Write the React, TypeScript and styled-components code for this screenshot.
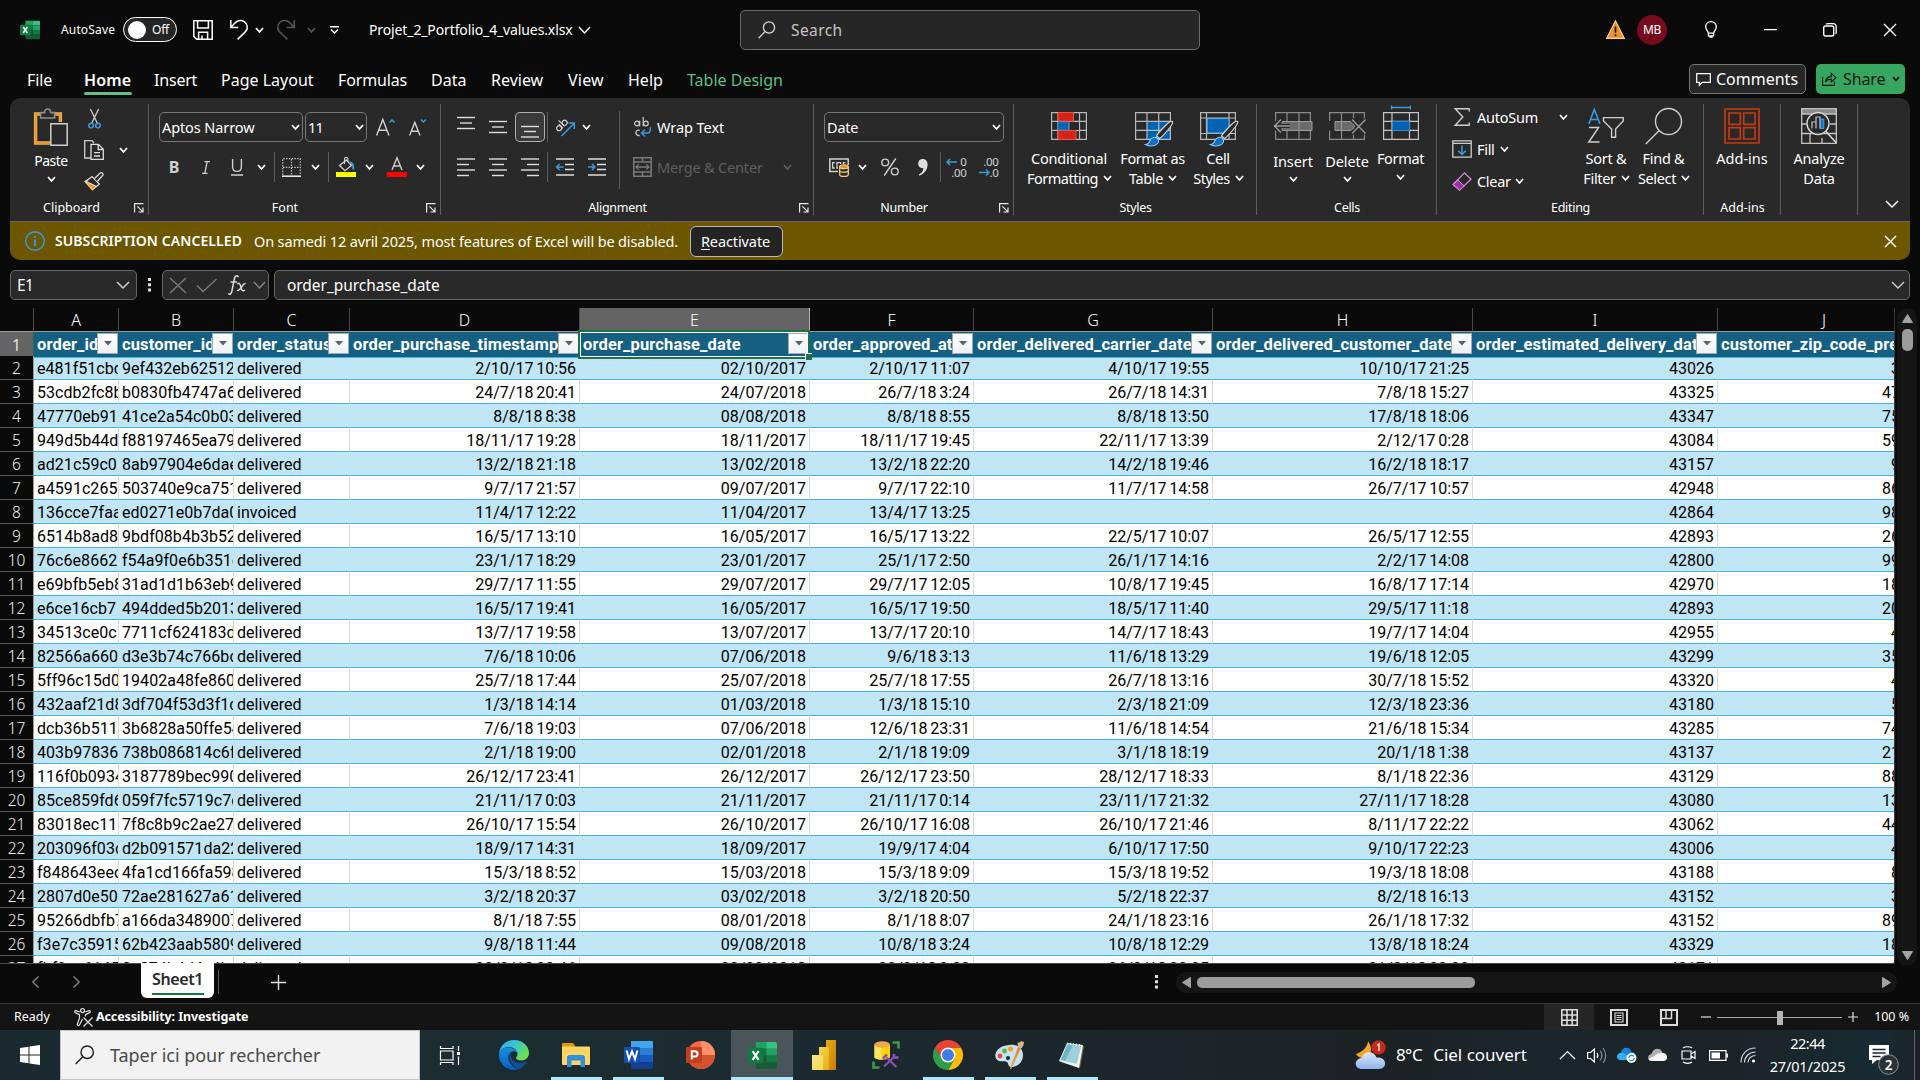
import React from 'react';
import styled, { createGlobalStyle, css } from 'styled-components';

const GlobalStyle = createGlobalStyle`
  * { box-sizing: border-box; }
  body { margin: 0; background: #0a0a0a; overflow: hidden; }
`;

/* ---------- shared primitives ---------- */

const Screen = styled.div`
  width: 1920px;
  height: 1080px;
  display: flex;
  flex-direction: column;
  background: #0a0a0a;
  color: #fff;
  font-family: 'Noto Sans', 'Open Sans', sans-serif;
  overflow: hidden;
`;

const T = styled.span<{ $s?: number; $ls?: number; $w?: number; $c?: string }>`
  font-size: ${(p) => p.$s ?? 14.5}px;
  letter-spacing: ${(p) => p.$ls ?? 0}px;
  font-weight: ${(p) => p.$w ?? 400};
  color: ${(p) => p.$c ?? '#fff'};
  line-height: 20px;
  white-space: pre;
`;

const Svg = styled.svg`
  display: block;
  flex: none;
  overflow: visible;
  fill: none;
`;

const Row = styled.div<{ $h?: number; $gap?: number }>`
  display: flex;
  align-items: center;
  height: ${(p) => (p.$h ? `${p.$h}px` : 'auto')};
  gap: ${(p) => p.$gap ?? 0}px;
`;

const Tool = styled.div<{ $w: number; $active?: boolean }>`
  width: ${(p) => p.$w}px;
  height: 30px;
  flex: none;
  display: flex;
  align-items: center;
  justify-content: center;
  ${(p) =>
    p.$active &&
    css`
      width: 30px;
      margin: 0 1px;
      background: #3a3a3a;
      box-shadow: inset 0 0 0 1px #b0b0b0;
      border-radius: 5px;
    `}
`;

const Rule = styled.div<{ $w?: number; $h?: number }>`
  width: ${(p) => p.$w ?? 7}px;
  height: ${(p) => p.$h ?? 30}px;
  flex: none;
  display: flex;
  justify-content: center;
  &::after {
    content: '';
    width: 1px;
    height: 100%;
    background: #5c5c5c;
  }
`;

const Chevron = ({ w = 7, h = 4, c = '#fff', sw = 1.7 }: { w?: number; h?: number; c?: string; sw?: number }) => (
  <Svg width={w} height={h} viewBox={`0 0 ${w} ${h}`}>
    <path d={`M0 0 L${w / 2} ${h} L${w} 0`} stroke={c} strokeWidth={sw} />
  </Svg>
);

/* ---------- title bar ---------- */

const TitleBar = styled.header`
  height: 59px;
  flex: none;
  display: flex;
  align-items: center;
  justify-content: space-between;
`;

const TitleLeft = styled.div`
  width: 740px;
  display: flex;
  align-items: center;
  padding-left: 20px;
`;

const Toggle = styled.div`
  width: 54px;
  height: 25px;
  margin: 0 6px 0 8px;
  border: 1px solid #fff;
  border-radius: 13px;
  background: #252525;
  display: flex;
  align-items: center;
  gap: 6px;
  padding-left: 4px;
  &::before {
    content: '';
    width: 18px;
    height: 18px;
    border-radius: 50%;
    background: #fff;
  }
`;

const AutoSaveLabel = styled.div`
  width: 75px;
  padding-left: 21px;
  display: flex;
`;

const FileName = styled.div`
  display: flex;
  align-items: center;
  gap: 6px;
  margin-left: 16px;
`;

const SearchBox = styled.div`
  width: 460px;
  height: 40px;
  margin-top: 1px;
  background: #262626;
  border: 1px solid #6a6a6a;
  border-radius: 5px;
  display: flex;
  align-items: center;
  padding-left: 17px;
  gap: 15px;
`;

const TitleRight = styled.div`
  width: 720px;
  display: flex;
  align-items: center;
  justify-content: flex-end;
`;

const Avatar = styled.div`
  width: 30px;
  height: 30px;
  border-radius: 50%;
  background: #750b1c;
  display: flex;
  align-items: center;
  justify-content: center;
  margin: 0 15px 0 12px;
`;

const ExcelLogo = ({ s = 20 }: { s?: number }) => (
  <Svg width={s} height={s} viewBox="0 0 30 28">
    <path d="M8 0h11v7H8z" fill="#21a366" />
    <path d="M19 0h9a2 2 0 0 1 2 2v5H19z" fill="#33c481" />
    <path d="M8 7h11v7H8z" fill="#107c41" />
    <path d="M19 7h11v7H19z" fill="#21a366" />
    <path d="M8 14h11v7H8z" fill="#185c37" />
    <path d="M19 14h11v7H19z" fill="#107c41" />
    <path d="M8 21h22v5a2 2 0 0 1-2 2H10a2 2 0 0 1-2-2z" fill="#185c37" />
    <rect x="0" y="6" width="16" height="16" rx="1.4" fill="#107c41" />
    <path d="M4.8 9.5 11 18.5M11 9.5 4.8 18.5" stroke="#fff" strokeWidth="2.3" />
  </Svg>
);

const SearchGlyph = ({ s = 18, c = '#d8d8d8' }: { s?: number; c?: string }) => (
  <Svg width={s} height={s} viewBox="0 0 18 18">
    <circle cx="11" cy="6.5" r="5.6" stroke={c} strokeWidth="1.3" />
    <path d="M7 10.6 0.6 17.2" stroke={c} strokeWidth="1.3" />
  </Svg>
);

const TitleArea = () => (
  <TitleBar>
    <TitleLeft>
      <ExcelLogo />
      <AutoSaveLabel>
        <T $s={12} $ls={0.15}>AutoSave</T>
      </AutoSaveLabel>
      <Toggle>
        <T $s={12} $ls={-0.2}>Off</T>
      </Toggle>
      <Tool $w={40}>
        <Svg width="20" height="20" viewBox="0 0 20 20">
          <path d="M0.8 0.8H19.2V19.2H3.6L0.8 16.4zM4.6 0.8V8H15.4V0.8M5.6 19V12.2H14.6V19M9 19v-3.4" stroke="#fff" strokeWidth="1.5" />
        </Svg>
      </Tool>
      <Tool $w={31}>
        <Svg width="18" height="20" viewBox="0 0 18 20">
          <path d="M0.8 0v7.4H8.2M1 7.2 5.4 2.6C9-1 14.4 0.4 16.4 4c1.5 3 .8 6-1.6 8.4L7.6 19.4" stroke="#fff" strokeWidth="1.5" />
        </Svg>
      </Tool>
      <Tool $w={11}><Chevron w={7} /></Tool>
      <Tool $w={42}>
        <Svg width="18" height="20" viewBox="0 0 18 20">
          <path d="M17.2 0v7.4H9.8M17 7.2 12.6 2.6C9-1 3.6 0.4 1.6 4 .1 7 .8 10 3.2 12.4L10.4 19.4" stroke="#555" strokeWidth="1.5" />
        </Svg>
      </Tool>
      <Tool $w={8}><Chevron w={7} c="#555" /></Tool>
      <Tool $w={38}>
        <Svg width="9" height="8" viewBox="0 0 9 8">
          <path d="M0 .7H9M1 3.6 4.5 7 8 3.6" stroke="#fff" strokeWidth="1.4" />
        </Svg>
      </Tool>
      <FileName>
        <T $s={14} $ls={-0.12}>Projet_2_Portfolio_4_values.xlsx</T>
        <Chevron w={11} h={6} sw={1.4} />
      </FileName>
    </TitleLeft>
    <SearchBox>
      <SearchGlyph />
      <T $s={15.5} $ls={0.4} $c="#c4c4c4">Search</T>
    </SearchBox>
    <TitleRight>
      <Svg width="19" height="19" viewBox="0 0 19 19">
        <path d="M9.5.8 18.4 18.4H.6z" fill="#e8912d" stroke="#f6d58a" strokeWidth="1.1" />
        <path d="M9.5 6.4v6.4M9.5 14.2v2" stroke="#2b1b05" strokeWidth="1.7" />
      </Svg>
      <Avatar>
        <T $s={12} $ls={-0.4}>MB</T>
      </Avatar>
      <Tool $w={58}>
        <Svg width="12" height="17" viewBox="0 0 12 17">
          <path d="M3.3 12.2C3.3 10 .7 9 .7 5.8.7 2.8 3 .7 6 .7s5.3 2.1 5.3 5.1c0 3.2-2.6 4.2-2.6 6.4zM3.4 12.4v2.4h5.2v-2.4M4.4 16.2h3.2" stroke="#fff" strokeWidth="1.3" />
        </Svg>
      </Tool>
      <Tool $w={60}>
        <Svg width="13" height="2" viewBox="0 0 13 2"><path d="M0 .6H13" stroke="#fff" strokeWidth="1.3" /></Svg>
      </Tool>
      <Tool $w={60}>
        <Svg width="14" height="14" viewBox="0 0 14 14">
          <rect x=".7" y="3" width="10" height="10" rx="1.8" stroke="#fff" strokeWidth="1.4" />
          <path d="M3 1.2C3.6.8 4 .7 5 .7h5.2a3 3 0 0 1 3 3V9c0 1-.1 1.4-.6 2" stroke="#fff" strokeWidth="1.3" />
        </Svg>
      </Tool>
      <Tool $w={60}>
        <Svg width="12" height="12" viewBox="0 0 12 12"><path d="M0 0 12 12M12 0 0 12" stroke="#fff" strokeWidth="1.4" /></Svg>
      </Tool>
    </TitleRight>
  </TitleBar>
);

/* ---------- tabs ---------- */

const TabBar = styled.nav`
  height: 39px;
  flex: none;
  display: flex;
  align-items: flex-start;
  justify-content: space-between;
  padding: 5px 15px 0 27px;
`;

const Tab = styled.div<{ $w: number; $on?: boolean }>`
  width: ${(p) => p.$w}px;
  height: 32px;
  padding-top: 6px;
  display: flex;
  flex-direction: column;
  ${(p) =>
    p.$on &&
    css`
      &::after {
        content: '';
        width: 48px;
        height: 3px;
        margin-top: 2px;
        border-radius: 2px;
        background: #5fbf84;
      }
    `}
`;

const CommentsButton = styled.div`
  width: 117px;
  height: 30px;
  background: #262626;
  border: 1px solid #757575;
  border-radius: 5px;
  display: flex;
  align-items: center;
  padding-left: 6px;
  gap: 5px;
`;

const ShareButton = styled.div`
  width: 89px;
  height: 30px;
  background: #37a660;
  border-radius: 5px;
  display: flex;
  align-items: center;
  padding-left: 6px;
  gap: 6px;
`;

const tabs: [string, number, number][] = [
  ['File', 57, -0.1],
  ['Home', 70, 0.1],
  ['Insert', 67, -0.2],
  ['Page Layout', 117, 0],
  ['Formulas', 93, -0.15],
  ['Data', 60, 0],
  ['Review', 77, 0],
  ['View', 60, 0.2],
  ['Help', 59, 0],
  ['Table Design', 120, 0],
];

const Tabs = () => (
  <TabBar>
    <Row>
      {tabs.map(([name, w, ls]) => (
        <Tab key={name} $w={w} $on={name === 'Home'}>
          <T $s={16} $ls={ls} $w={name === 'Home' ? 600 : 400} $c={name === 'Table Design' ? '#5fbf84' : '#fff'}>
            {name}
          </T>
        </Tab>
      ))}
    </Row>
    <Row $gap={10}>
      <CommentsButton>
        <Svg width="15" height="13" viewBox="0 0 15 13">
          <path d="M.7.7H14.3V9.4H6.2L3.4 12.2V9.4H.7z" stroke="#fff" strokeWidth="1.2" />
        </Svg>
        <T $s={16}>Comments</T>
      </CommentsButton>
      <ShareButton>
        <Svg width="15" height="14" viewBox="0 0 15 14">
          <path d="M.6 5V13.4H12.4V9.5M3.4 10C4 6.6 6 4.6 9.2 4.6V1.2L14 5.7 9.2 10V7C7 7 5 7.8 3.4 10z" stroke="#0a1a10" strokeWidth="1.1" />
        </Svg>
        <T $s={16} $ls={-0.1} $c="#0a1a10">Share</T>
        <Tool $w={10}><Chevron w={6} h={3.5} c="#0a1a10" /></Tool>
      </ShareButton>
    </Row>
  </TabBar>
);

/* ---------- ribbon ---------- */

const Ribbon = styled.section`
  height: 124px;
  flex: none;
  margin: 0 10px;
  background: #292929;
  border-bottom: 1px solid #666;
  border-radius: 10px 10px 0 0;
  display: flex;
`;

const Group = styled.div<{ $w: number }>`
  width: ${(p) => p.$w}px;
  height: 111px;
  margin-top: 6px;
  flex: none;
  border-right: 1px solid #5c5c5c;
  display: flex;
  flex-direction: column;
  justify-content: space-between;
`;

const GroupBody = styled.div<{ $pad?: number }>`
  height: 92px;
  display: flex;
  padding-left: ${(p) => p.$pad ?? 0}px;
`;

const GroupFoot = styled.div<{ $shift?: number }>`
  height: 19px;
  display: grid;
  grid-template-columns: 15px 1fr 10px 4px;
  grid-template-rows: 12px;
  align-items: center;
  justify-items: center;
  padding-top: 6px;
  & > span {
    grid-column: 2;
    padding-right: ${(p) => p.$shift ?? 0}px;
  }
`;

const ToolRows = styled.div`
  display: flex;
  flex-direction: column;
  gap: 10px;
  padding-top: 8px;
`;

const Combo = styled.div<{ $w: number }>`
  width: ${(p) => p.$w}px;
  height: 30px;
  margin-right: 2px;
  padding: 0 3px 0 2px;
  border: 1px solid #777;
  border-radius: 5px;
  display: flex;
  align-items: center;
  justify-content: space-between;
`;

const BigButton = styled.div<{ $w: number; $top?: number; $drop?: number }>`
  width: ${(p) => p.$w}px;
  flex: none;
  display: flex;
  flex-direction: column;
  align-items: center;
  padding-top: ${(p) => p.$top ?? 4}px;
  & > svg:first-child { margin-bottom: ${(p) => p.$drop ?? 5}px; }
`;

const CenterLabel = styled.div`
  height: 20px;
  display: flex;
  align-items: center;
  justify-content: center;
  gap: 6px;
`;

const ArrowBelow = styled.div<{ $gap?: number }>`
  height: 14px;
  padding-top: ${(p) => p.$gap ?? 6}px;
`;

const SmallStack = styled.div<{ $w: number }>`
  width: ${(p) => p.$w}px;
  display: flex;
  flex-direction: column;
  padding-top: 4px;
`;

const Launcher = () => (
  <Svg width="10" height="10" viewBox="0 0 10 10">
    <path d="M.6 9.5V.6H9.5M3.4 3.4 8.4 8.4M9 4.4V9H4.4" stroke="#e8e8e8" strokeWidth="1.2" />
  </Svg>
);

const Foot = ({ label, ls = 0, launch = false, shift = 0 }: { label: string; ls?: number; launch?: boolean; shift?: number }) => (
  <GroupFoot $shift={shift}>
    <T $s={12.5} $ls={ls}>{label}</T>
    {launch && <Launcher />}
  </GroupFoot>
);

const Lines = ({ rows }: { rows: [number, number, number][] }) => (
  <Svg width="18" height="30" viewBox="0 0 18 30">
    {rows.map(([x, y, w]) => (
      <path key={y} d={`M${x} ${y}h${w}`} stroke="#dedede" strokeWidth="1.4" />
    ))}
  </Svg>
);

const Indent = ({ out }: { out?: boolean }) => (
  <Svg width="18" height="18" viewBox="0 0 18 18">
    <path d="M0 1H18M9 6.5h9M9 11.5h9M0 17H18" stroke="#dedede" strokeWidth="1.4" />
    <path d={out ? 'M7.5 9H.8M3.6 6 .6 9l3 3' : 'M0 9H6.7M3.9 6l3 3-3 3'} stroke="#3a9be0" strokeWidth="1.5" />
  </Svg>
);

const ClipboardGroup = () => (
  <Group $w={139}>
    <GroupBody $pad={11}>
      <BigButton $w={60} $drop={5}>
        <Svg width="34" height="38" viewBox="0 0 34 38">
          <path d="M8 6H1.6v29H16M20 6h6.4v8" stroke="#f2b04d" strokeWidth="3.4" />
          <path d="M8 6H1.6v29H16M20 6h6.4v8" stroke="#e8912d" strokeWidth="1.4" />
          <path d="M6.6 10V4.6h4C10.6 2 12 1 13.6 1s3 1 3 3.6h4V10z" fill="#292929" stroke="#8f8f8f" strokeWidth="1.6" />
          <path d="M16.8 15.8H33.2V37.2H16.8z" fill="#292929" stroke="#cfcfcf" strokeWidth="1.5" />
        </Svg>
        <CenterLabel><T $s={14} $ls={-0.5}>Paste</T></CenterLabel>
        <ArrowBelow $gap={6}><Chevron /></ArrowBelow>
      </BigButton>
      <SmallStack $w={26}>
        <Row $h={21}>
          <Tool $w={26}>
            <Svg width="13" height="20" viewBox="0 0 13 20">
              <path d="M2.4 0 9.2 14M10.6 0 3.8 14" stroke="#cfcfcf" strokeWidth="1.3" />
              <circle cx="3.1" cy="16.6" r="2.3" stroke="#3a9be0" strokeWidth="1.5" />
              <circle cx="9.9" cy="16.6" r="2.3" stroke="#3a9be0" strokeWidth="1.5" />
            </Svg>
          </Tool>
        </Row>
        <Row $h={42}>
          <Tool $w={26}>
            <Svg width="20" height="20" viewBox="0 0 20 20">
              <path d="M7 18H.7V.7H8L10 3" stroke="#cfcfcf" strokeWidth="1.3" />
              <path d="M7 4.4h7.5l4.8 4.8v10.1H7zM14.2 4.6v4.9h4.9M10 12.7h6M10 16h6" stroke="#dedede" strokeWidth="1.3" />
            </Svg>
          </Tool>
        </Row>
        <Row $h={21}>
          <Tool $w={26}>
            <Svg width="20" height="19" viewBox="0 0 20 19">
              <path d="M1 9.5 8.5 18l6-5.5-7-7z" fill="#e8912d" stroke="#f6cf7c" strokeWidth="1.2" />
              <path d="M2 9.2 8 4.6l7.3 7.4-3 2.6z" fill="#292929" stroke="#dedede" strokeWidth="1.2" />
              <path d="M10.5 6.5 16.5.8c1.5-.8 3.2.8 2.4 2.4L13.3 9.5" stroke="#dedede" strokeWidth="1.3" fill="#292929" />
            </Svg>
          </Tool>
        </Row>
      </SmallStack>
      <SmallStack $w={30}>
        <Row $h={84}><Tool $w={32}><Chevron /></Tool></Row>
      </SmallStack>
    </GroupBody>
    <Foot label="Clipboard" launch shift={16} />
  </Group>
);

const FontGroup = () => (
  <Group $w={292}>
    <GroupBody $pad={10}>
      <ToolRows>
        <Row>
          <Combo $w={144}><T $ls={-0.1}>Aptos Narrow</T><Chevron /></Combo>
          <Combo $w={62}><T $ls={-0.8}>11</T><Chevron /></Combo>
          <Tool $w={32}>
            <Svg width="19" height="18" viewBox="0 0 19 18">
              <path d="M.6 17.5 6.8 1.5 13 17.5M2.8 12.2h8" stroke="#cfcfcf" strokeWidth="1.4" />
              <path d="M13.5 4.5 16 2l2.5 2.5" stroke="#3a9be0" strokeWidth="1.5" />
            </Svg>
          </Tool>
          <Tool $w={34}>
            <Svg width="18" height="18" viewBox="0 0 18 18">
              <path d="M.6 17.5 5.8 4.5 11 17.5M2.6 13.2h6.4" stroke="#cfcfcf" strokeWidth="1.4" />
              <path d="M12 1.5 14.5 4 17 1.5" stroke="#3a9be0" strokeWidth="1.5" />
            </Svg>
          </Tool>
        </Row>
        <Row>
          <Tool $w={30}><T $s={16} $w={700} $c="#cfcfcf">B</T></Tool>
          <Tool $w={34}>
            <Svg width="8" height="13" viewBox="0 0 8 13"><path d="M2.5.6H8M0 12.4H5.5M5.2.6 2.8 12.4" stroke="#cfcfcf" strokeWidth="1.3" /></Svg>
          </Tool>
          <Tool $w={28}>
            <Svg width="12" height="17" viewBox="0 0 12 17"><path d="M1.6 0v7.8c0 3 1.7 4.6 4.4 4.6s4.4-1.6 4.4-4.6V0M0 16H12" stroke="#cfcfcf" strokeWidth="1.4" /></Svg>
          </Tool>
          <Tool $w={20}><Chevron /></Tool>
          <Rule />
          <Tool $w={27}>
            <Svg width="19" height="19" viewBox="0 0 19 19">
              <path d="M.7 17V.7H18.3V17M9.5 1v16M1 9.3h17" stroke="#bdbdbd" strokeWidth="1.2" strokeDasharray="1.5 1.3" />
              <path d="M0 18.2H19" stroke="#e8e8e8" strokeWidth="1.6" />
            </Svg>
          </Tool>
          <Tool $w={20}><Chevron /></Tool>
          <Rule />
          <Tool $w={28}>
            <Svg width="20" height="20" viewBox="0 0 20 20">
              <path d="M3.5 8.5 10.5 3l5 5.5-6.5 5.2z" stroke="#cfcfcf" strokeWidth="1.3" />
              <path d="M8.5 7V1.5C9 0 11.3 0 11.8 1.5V5" stroke="#cfcfcf" strokeWidth="1.1" />
              <path d="M13.5 5.5c3 0 4 2.5 3.8 7" stroke="#3a9be0" strokeWidth="2" />
              <path d="M0 15H20v5H0z" fill="#ffff00" />
            </Svg>
          </Tool>
          <Tool $w={18}><Chevron /></Tool>
          <Tool $w={38}>
            <Svg width="20" height="20" viewBox="0 0 20 20">
              <path d="M5 13 10 .8 15 13M6.8 9h6.4" stroke="#cfcfcf" strokeWidth="1.4" />
              <path d="M0 15H20v5H0z" fill="#ff0000" />
            </Svg>
          </Tool>
          <Tool $w={8}><Chevron /></Tool>
        </Row>
      </ToolRows>
    </GroupBody>
    <Foot label="Font" launch shift={20} />
  </Group>
);

const WrapBlock = styled.div`
  display: flex;
  flex-direction: column;
  gap: 10px;
  padding: 8px 0 0 6px;
`;

const AlignmentGroup = () => (
  <Group $w={373}>
    <GroupBody $pad={9}>
      <ToolRows>
        <Row>
          <Tool $w={32}><Lines rows={[[0, 5.5, 18], [3, 11, 12], [0, 16.5, 18]]} /></Tool>
          <Tool $w={32}><Lines rows={[[0, 9.5, 18], [3, 15, 12], [0, 20.5, 18]]} /></Tool>
          <Tool $w={30} $active><Lines rows={[[0, 14.5, 18], [3, 19.5, 12], [0, 25, 18]]} /></Tool>
          <Rule $w={3} />
          <Tool $w={32}>
            <Svg width="20" height="20" viewBox="0 0 20 20">
              <g transform="rotate(-45 6 8)">
                <circle cx="2.4" cy="9" r="2.5" stroke="#cfcfcf" strokeWidth="1.2" />
                <path d="M5 6v5.6M7.6 3v8.6" stroke="#cfcfcf" strokeWidth="1.2" />
                <circle cx="10.1" cy="9" r="2.5" stroke="#cfcfcf" strokeWidth="1.2" />
              </g>
              <path d="M6.5 19 19 6.5M13.5 6H19.3V12" stroke="#3a9be0" strokeWidth="1.5" />
            </Svg>
          </Tool>
          <Tool $w={10}><Chevron /></Tool>
        </Row>
        <Row>
          <Tool $w={32}><Lines rows={[[0, 7, 18], [0, 12.5, 12], [0, 18, 18], [0, 23.5, 12]]} /></Tool>
          <Tool $w={32}><Lines rows={[[0, 7, 18], [3, 12.5, 12], [0, 18, 18], [3, 23.5, 12]]} /></Tool>
          <Tool $w={32}><Lines rows={[[0, 7, 18], [6, 12.5, 12], [0, 18, 18], [6, 23.5, 12]]} /></Tool>
          <Rule $w={3} />
          <Tool $w={32}><Indent out /></Tool>
          <Tool $w={32}><Indent /></Tool>
        </Row>
      </ToolRows>
      <Row $h={92}><Rule $w={13} $h={78} /></Row>
      <WrapBlock>
        <Row $h={30}>
          <Tool $w={20}>
            <Svg width="17" height="21" viewBox="0 0 17 21">
              <circle cx="3" cy="6.5" r="2.3" stroke="#cfcfcf" strokeWidth="1.2" />
              <path d="M5.7 3.8V9.2M9.2 0V9.2" stroke="#cfcfcf" strokeWidth="1.2" />
              <circle cx="11.9" cy="6.5" r="2.3" stroke="#cfcfcf" strokeWidth="1.2" />
              <path d="M5.6 13.3a2.7 2.7 0 1 0 0 5" stroke="#cfcfcf" strokeWidth="1.3" />
              <path d="M16.3 10v2.5c0 2-1 3.5-3.5 3.5H8M11 12.6 7.6 16l3.4 3.4" stroke="#3a9be0" strokeWidth="1.4" />
            </Svg>
          </Tool>
          <Tool $w={5} />
          <T $ls={-0.05}>Wrap Text</T>
        </Row>
        <Row $h={30}>
          <Tool $w={20}>
            <Svg width="19" height="20" viewBox="0 0 19 20">
              <path d="M.8.8H18.2V19.2H.8zM.8 5H18.2M.8 15H18.2M9.5.8V5M9.5 15v4" stroke="#7b7b7b" strokeWidth="1.5" />
              <path d="M3 10H16M5.6 7.4 3 10l2.6 2.6M13.4 7.4 16 10l-2.6 2.6" stroke="#7b7b7b" strokeWidth="1.3" />
            </Svg>
          </Tool>
          <Tool $w={5} />
          <T $ls={-0.17} $c="#5f5f5f">Merge &amp; Center</T>
          <Tool $w={50}><Chevron c="#5f5f5f" /></Tool>
        </Row>
      </WrapBlock>
    </GroupBody>
    <Foot label="Alignment" ls={-0.25} launch shift={20} />
  </Group>
);

const DecimalIcon = ({ top, bottom, left }: { top: string; bottom: string; left: boolean }) => (
  <Svg width="20" height="20" viewBox="0 0 20 20">
    <text x="19.5" y="9" textAnchor="end" fontFamily="Noto Sans" fontSize="11.5" fill="#cfcfcf" letterSpacing="-.3">{top}</text>
    <text x="19.5" y="19.5" textAnchor="end" fontFamily="Noto Sans" fontSize="11.5" fill="#cfcfcf" letterSpacing="-.3">{bottom}</text>
    <path d={left ? 'M10 5H0M3 2 0 5l3 3' : 'M0 15.5H10M7 12.5l3 3-3 3'} stroke="#3a9be0" strokeWidth="1.5" />
  </Svg>
);

const NumberGroup = () => (
  <Group $w={200}>
    <GroupBody $pad={10}>
      <ToolRows>
        <Row><Combo $w={180}><T $ls={-0.2}>Date</T><Chevron /></Combo></Row>
        <Row>
          <Tool $w={30}>
            <Svg width="20" height="19" viewBox="0 0 20 19">
              <path d="M9 13.5H.8V1H19.2V7" stroke="#cfcfcf" strokeWidth="1.5" />
              <path d="M5.8 4.6H3.6V10H5.8M11.6 6V4.6H8V10H9M16.4 4.6h-2V6" stroke="#cfcfcf" strokeWidth="1.3" />
              <path d="M10.7 9v7.8c0 2.2 8.6 2.2 8.6 0V9z" fill="#292929" stroke="#f6cf7c" strokeWidth="1.3" />
              <ellipse cx="15" cy="8.8" rx="4.3" ry="1.9" fill="#e8912d" stroke="#f6cf7c" strokeWidth="1.2" />
              <path d="M10.7 12.7c0 2 8.6 2 8.6 0" stroke="#f6cf7c" strokeWidth="1.2" />
            </Svg>
          </Tool>
          <Tool $w={17}><Chevron /></Tool>
          <Tool $w={38}>
            <Svg width="18" height="18" viewBox="0 0 18 18">
              <circle cx="4.2" cy="4.5" r="3.4" stroke="#cfcfcf" strokeWidth="1.4" />
              <circle cx="13.8" cy="13.5" r="3.4" stroke="#cfcfcf" strokeWidth="1.4" />
              <path d="M14.8.5 3.2 17.5" stroke="#cfcfcf" strokeWidth="1.4" />
            </Svg>
          </Tool>
          <Tool $w={28}>
            <Svg width="10" height="17" viewBox="0 0 10 17">
              <path d="M4.5 0C7.5 0 9.6 2 9.6 5.6c0 5-2.8 8.9-8.2 11.2L.8 15.6C3.8 14 5.2 12 5.4 9.2 2.3 9.6.2 7.6.2 4.8.2 2 2 0 4.5 0z" fill="#dedede" />
            </Svg>
          </Tool>
          <Rule $w={6} />
          <Tool $w={28}><DecimalIcon top="0" bottom=".00" left /></Tool>
          <Tool $w={36}><DecimalIcon top=".00" bottom=".0" left={false} /></Tool>
        </Row>
      </ToolRows>
    </GroupBody>
    <Foot label="Number" ls={-0.25} launch shift={20} />
  </Group>
);

const Brush = () => (
  <>
    <path d="M37.5 9.5c1 1-1 4-3 6.5-3.5 4.5-8.5 9.5-10 10.5l-3-2.5c1-2 6-7.5 9.5-11 2.5-2.5 5.5-4.5 6.5-3.5z" fill="#292929" stroke="#d8d8d8" strokeWidth="1.2" />
    <path d="M10.5 32.5c3 0 3.5-1.5 4.5-4 1.5-3.5 5.5-4 7.5-2 2.2 2.3 1 5.3-2 6.5-3.5 1.3-7.5 1-10-.5z" fill="#0f6fc5" stroke="#8cc8f5" strokeWidth="1.1" />
  </>
);

const DropLabel = ({ text, ls = 0 }: { text: string; ls?: number }) => (
  <CenterLabel><T $ls={ls}>{text}</T><Chevron /></CenterLabel>
);

const StylesGroup = () => (
  <Group $w={243}>
    <GroupBody $pad={5}>
      <BigButton $w={100} $top={8} $drop={8}>
        <Svg width="36" height="28" viewBox="0 0 36 28">
          <path d="M.6.6H35.4V27.4H.6zM0 9.3H36M0 18.3H36M7 0V28M18 0V28M28.5 0V28" stroke="#b9b9b9" strokeWidth="1.2" />
          <path d="M7 .5H22.5V9.2H7zM7 18.4H25V27.4H7z" fill="#d32417" stroke="#ff4a3d" strokeWidth="1" />
          <path d="M18.6 10H28V18H18.6z" fill="#292929" />
          <path d="M7 10H17.5V18H7z" fill="#0063b1" stroke="#2f8fd8" strokeWidth=".8" />
        </Svg>
        <CenterLabel><T $ls={-0.2}>Conditional</T></CenterLabel>
        <DropLabel text="Formatting" ls={-0.5} />
      </BigButton>
      <BigButton $w={67} $top={8} $drop={8}>
        <Svg width="36" height="28" viewBox="0 0 36 28">
          <path d="M12 9.3H35.4V27.4H12z" fill="#0063b1" />
          <path d="M.6.6H35.4V27.4H.6zM0 9.3H36M0 18.3H36M12 0V28M23.7 0V28" stroke="#b9b9b9" strokeWidth="1.2" />
          <Brush />
        </Svg>
        <CenterLabel><T $ls={-0.4}>Format as</T></CenterLabel>
        <DropLabel text="Table" ls={-0.4} />
      </BigButton>
      <BigButton $w={64} $top={8} $drop={8}>
        <Svg width="36" height="28" viewBox="0 0 36 28">
          <path d="M.6.6H35.4V27.4H.6zM0 6H36M0 21.5H36M6.5 0V28M29 0V28" stroke="#b9b9b9" strokeWidth="1.2" />
          <path d="M7.2 6.6H29V21H7.2z" fill="#0063b1" stroke="#63b1ee" strokeWidth="1" />
          <Brush />
        </Svg>
        <CenterLabel><T $ls={-0.3}>Cell</T></CenterLabel>
        <DropLabel text="Styles" ls={-0.5} />
      </BigButton>
    </GroupBody>
    <Foot label="Styles" ls={-0.3} />
  </Group>
);

const CellsGroup = () => (
  <Group $w={180}>
    <GroupBody $pad={9}>
      <BigButton $w={54} $top={8} $drop={11}>
        <Svg width="38" height="28" viewBox="0 0 38 28">
          <path d="M1.6 9V.6H36.4V9M1.6 18.5V27.4H36.4V18.5M13 0V28M25 0V28" stroke="#8a8a8a" strokeWidth="1.2" />
          <path d="M8 9.5H38V18.5H8z" fill="#6b6b6b" stroke="#9a9a9a" />
          <path d="M25 9.5v9" stroke="#9a9a9a" />
          <path d="M0 14H16M7 7.5 .5 14 7 20.5" stroke="#292929" strokeWidth="4" />
          <path d="M0 14H16M7 7.5 .5 14 7 20.5" stroke="#9a9a9a" strokeWidth="1.5" />
        </Svg>
        <CenterLabel><T $ls={-0.1}>Insert</T></CenterLabel>
        <ArrowBelow $gap={6}><Chevron /></ArrowBelow>
      </BigButton>
      <BigButton $w={54} $top={8} $drop={11}>
        <Svg width="36" height="28" viewBox="0 0 36 28">
          <path d="M.6 9V.6H35.4V8M.6 18.5V27.4H35.4V21M12.5 0V28M24.5 0V28" stroke="#8a8a8a" strokeWidth="1.2" />
          <path d="M6 9.5H22L26 14l-4 4.5H6z" fill="#6b6b6b" stroke="#9a9a9a" />
          <path d="M12.5 9.5v9" stroke="#9a9a9a" />
          <path d="M23 7.5 36.5 21.5M36.5 7.5 23 21.5" stroke="#292929" strokeWidth="4" />
          <path d="M23 7.5 36.5 21.5M36.5 7.5 23 21.5" stroke="#9a9a9a" strokeWidth="1.4" />
        </Svg>
        <CenterLabel><T $ls={-0.1}>Delete</T></CenterLabel>
        <ArrowBelow $gap={6}><Chevron /></ArrowBelow>
      </BigButton>
      <BigButton $w={53} $top={8} $drop={8}>
        <Svg width="36" height="28" viewBox="0 0 36 28">
          <path d="M.6.6H35.4V27.4H.6zM0 9.3H36M0 18.3H36M9 0V28M26.5 0V28" stroke="#c4c4c4" strokeWidth="1.2" />
          <path d="M9.5 9.5H26.5V18.5H9.5z" fill="#0063b1" stroke="#2f8fd8" />
          <path d="M8.5-4.5H27.5M8.6-6.5v4M27.4-6.5v4" stroke="#3a9be0" strokeWidth="1.4" />
        </Svg>
        <CenterLabel><T $ls={-0.35}>Format</T></CenterLabel>
        <ArrowBelow $gap={7}><Chevron /></ArrowBelow>
      </BigButton>
    </GroupBody>
    <Foot label="Cells" ls={-0.3} />
  </Group>
);

const EditList = styled.div`
  width: 139px;
  display: flex;
  flex-direction: column;
  gap: 2px;
  margin-top: -2px;
`;

const EditingGroup = () => (
  <Group $w={267}>
    <GroupBody $pad={15}>
      <EditList>
        <Row $h={30}>
          <Tool $w={20}>
            <Svg width="16" height="18" viewBox="0 0 16 18"><path d="M15.2 3.5V.8H1.2L8.8 9 1.2 17.2H15.2V14.5" stroke="#cfcfcf" strokeWidth="1.4" /></Svg>
          </Tool>
          <Tool $w={5} />
          <T $ls={-0.25}>AutoSum</T>
          <Tool $w={51}><Chevron /></Tool>
        </Row>
        <Row $h={32}>
          <Tool $w={20}>
            <Svg width="20" height="18" viewBox="0 0 20 18">
              <path d="M.8.8H19.2V17.2H.8zM.8 3.4H19.2" stroke="#cfcfcf" strokeWidth="1.3" />
              <path d="M10 5.5V14.5M6.2 10.8 10 14.5l3.8-3.7" stroke="#3a9be0" strokeWidth="1.5" />
            </Svg>
          </Tool>
          <Tool $w={5} />
          <T $ls={-0.3}>Fill</T>
          <Tool $w={19}><Chevron /></Tool>
        </Row>
        <Row $h={30}>
          <Tool $w={20}>
            <Svg width="20" height="19" viewBox="0 0 20 19">
              <path d="M1 12.5 12.5.8 19 7.3 7.5 18.2z" stroke="#d48ad8" strokeWidth="1.3" />
              <path d="M1.4 12.5 6 8l6.2 6L7.5 18z" fill="#9b2fa5" stroke="#d48ad8" strokeWidth="1" />
            </Svg>
          </Tool>
          <Tool $w={5} />
          <T $ls={-0.3}>Clear</T>
          <Tool $w={18}><Chevron /></Tool>
        </Row>
      </EditList>
      <BigButton $w={34} $top={4} $drop={4}>
        <Svg width="36" height="36" viewBox="0 0 36 36">
          <path d="M.8 16 6.3 1.5 12 16M3 11.5H9.8" stroke="#3a9be0" strokeWidth="1.6" />
          <path d="M1 19.6H10.5L.8 34H11.5" stroke="#cfcfcf" strokeWidth="1.5" />
          <path d="M15.5 9.6H35.2V13L27.6 21V29.3H23.6V21L15.5 13z" stroke="#cfcfcf" strokeWidth="1.4" />
        </Svg>
        <CenterLabel><T $ls={-0.25}>Sort &amp;</T></CenterLabel>
        <DropLabel text="Filter" ls={-0.35} />
      </BigButton>
      <BigButton $w={81} $top={4} $drop={4}>
        <Svg width="37" height="36" viewBox="0 0 37 36">
          <circle cx="23.5" cy="13.5" r="13" stroke="#cfcfcf" strokeWidth="1.4" />
          <path d="M14.2 22.5.8 36" stroke="#cfcfcf" strokeWidth="1.4" />
        </Svg>
        <CenterLabel><T $ls={-0.25}>Find &amp;</T></CenterLabel>
        <DropLabel text="Select" ls={-0.35} />
      </BigButton>
    </GroupBody>
    <Foot label="Editing" ls={-0.3} />
  </Group>
);

const AddinsGroup = () => (
  <Group $w={77}>
    <GroupBody>
      <BigButton $w={76} $top={4} $drop={4}>
        <Svg width="36" height="36" viewBox="0 0 36 36">
          <path d="M1 1H35V35H1zM5 5H16.3V16.3H5zM19.7 5H31V16.3H19.7zM5 19.7H16.3V31H5zM19.7 19.7H31V31H19.7z" stroke="#c43a12" strokeWidth="1.7" />
        </Svg>
        <CenterLabel><T>Add-ins</T></CenterLabel>
      </BigButton>
    </GroupBody>
    <Foot label="Add-ins" />
  </Group>
);

const AnalyzeGroup = () => (
  <Group $w={77}>
    <GroupBody>
      <BigButton $w={76} $top={4} $drop={4}>
        <Svg width="36" height="36" viewBox="0 0 36 36">
          <path d="M0 0H36V6H0z" fill="#8a8a8a" />
          <path d="M.7.7H35.3V35.3H.7zM0 6H36M0 16H6M29 16h7M0 25.5H36M9 25.5V35M21 30v6M8 30" stroke="#c4c4c4" strokeWidth="1.3" />
          <circle cx="17" cy="15.5" r="11.5" fill="#292929" />
          <circle cx="17" cy="15.5" r="11" stroke="#d8d8d8" strokeWidth="1.4" />
          <path d="M25 23.5 35 34.5" stroke="#d8d8d8" strokeWidth="1.6" />
          <path d="M11 20.5V14h4v6.5M15 20.5V9h4v11.5" stroke="#c4c4c4" strokeWidth="1.2" />
          <path d="M19.5 11H22.8V20.5H19.5z" fill="#0f6fc5" stroke="#63b1ee" strokeWidth=".8" />
        </Svg>
        <CenterLabel><T $ls={-0.2}>Analyze</T></CenterLabel>
        <CenterLabel><T $ls={-0.1}>Data</T></CenterLabel>
      </BigButton>
    </GroupBody>
  </Group>
);

const CollapseCorner = styled.div`
  flex: 1;
  display: flex;
  align-items: flex-end;
  justify-content: flex-end;
  padding: 0 12px 14px 0;
`;

/* ---------- subscription banner ---------- */

const Banner = styled.section`
  height: 38px;
  flex: none;
  margin: 0 10px;
  padding: 0 14px 0 15px;
  background: #6c5600;
  border-radius: 0 0 10px 10px;
  display: flex;
  align-items: center;
`;

const Reactivate = styled.button`
  width: 93px;
  height: 31px;
  margin: 0 auto 0 11px;
  padding: 0 2px 0 0;
  background: #242424;
  border: 1px solid #b9b9b9;
  border-radius: 6px;
  font-family: inherit;
  u { text-underline-offset: 2px; }
`;

const BannerTitle = styled.div`
  width: 199px;
  margin-left: 10px;
  display: flex;
`;

const MessageText = styled.div`
  width: 425px;
  display: flex;
`;

/* ---------- formula bar ---------- */

const FormulaBar = styled.section`
  height: 48px;
  flex: none;
  display: flex;
  align-items: flex-start;
  padding: 10px 10px 0;
`;

const Field = styled.div<{ $w?: number }>`
  width: ${(p) => (p.$w ? `${p.$w}px` : 'auto')};
  flex: ${(p) => (p.$w ? 'none' : 1)};
  height: 30px;
  background: #292929;
  border: 1px solid #666;
  border-radius: 5px;
  display: flex;
  align-items: center;
  justify-content: space-between;
  padding: 0 7px 0 6px;
`;

const FxField = styled(Field)`
  margin-right: 5px;
  padding: 0 0 0 7px;
  justify-content: flex-start;
  gap: 11px;
  & > svg:last-child { margin-left: -3px; }
`;

const WideField = styled(Field)`
  padding-left: 12px;
  padding-right: 5px;
`;

const Dots = () => (
  <Svg width="3" height="14" viewBox="0 0 3 14">
    <path d="M0 0h3v3H0zM0 5.3h3v3H0zM0 10.6h3v3H0z" fill="#e0e0e0" />
  </Svg>
);

/* ---------- grid ---------- */

const GridArea = styled.section`
  height: 656px;
  flex: none;
  display: flex;
`;

const Sheet = styled.div`
  width: 1895px;
  height: 656px;
  overflow: hidden;
  border-bottom: 1px solid #4a4a4a;
  border-right: 1px solid #3a3a3a;
`;

const COLS = [85, 115, 116, 230, 230, 164, 239, 260, 245, 213];

const Line = styled.div`
  display: grid;
  grid-template-columns: 34px ${COLS.map((c) => `${c}px`).join(' ')};
  width: 1931px;
  height: 24px;
`;

const ColHead = styled.div<{ $on?: boolean }>`
  display: flex;
  align-items: center;
  justify-content: center;
  background: ${(p) => (p.$on ? '#646464' : '#0a0a0a')};
  border-right: 1px solid ${(p) => (p.$on ? '#b0b0b0' : '#4a4a4a')};
  border-bottom: 1px solid #9a9a9a;
`;

const RowHead = styled.div<{ $on?: boolean }>`
  display: flex;
  align-items: center;
  justify-content: center;
  padding-top: 1px;
  background: ${(p) => (p.$on ? '#646464' : '#0a0a0a')};
  border-right: ${(p) => (p.$on ? '1px solid #1e7145' : '1px solid #9a9a9a')};
  border-bottom: 1px solid #5c5c5c;
`;

const Cell = styled.div<{ $right?: boolean; $band?: boolean }>`
  overflow: hidden;
  height: 24px;
  padding: 0 3px;
  font: 400 16px/26px Roboto, 'Noto Sans', sans-serif;
  letter-spacing: 0.05px;
  color: #000;
  white-space: pre;
  text-align: ${(p) => (p.$right ? 'right' : 'left')};
  ${(p) => p.$right && 'word-spacing: -1.2px; letter-spacing: 0;'}
  background: ${(p) => (p.$band ? '#c0e6f5' : '#fff')};
  border-right: 1px solid ${(p) => (p.$band ? '#c0e6f5' : '#dcdcdc')};
  border-bottom: 1px solid #44b3e1;
`;

const HeadCell = styled.div<{ $selected?: boolean }>`
  position: relative;
  display: flex;
  justify-content: space-between;
  padding-right: 1px;
  overflow: ${(p) => (p.$selected ? 'visible' : 'hidden')};
  background: #156082;
  border-bottom: 1px solid #44b3e1;
  ${(p) =>
    p.$selected &&
    css`
      z-index: 1;
      &::before {
        content: '';
        position: absolute;
        inset: -2px 0 -2px -2px;
        border: 2px solid #1e7145;
        box-shadow: inset 0 0 0 1px #fff;
      }
      &::after {
        content: '';
        position: absolute;
        right: -2px;
        bottom: -3px;
        width: 6px;
        height: 6px;
        background: #1e7145;
        border: 1px solid #fff;
        border-width: 1px 0 0 1px;
      }
    `}
`;

const HeadText = styled.span`
  min-width: 0;
  flex: 1;
  padding-left: 3px;
  overflow: hidden;
  font: 700 16.5px/25px Roboto, 'Noto Sans', sans-serif;
  letter-spacing: 0.13px;
  color: #fff;
  white-space: pre;
`;

const FilterButton = styled.div`
  width: 21px;
  height: 21px;
  flex: none;
  margin: 1px 0 0;
  background: linear-gradient(#ffffff, #eef1f5);
  border: 1px solid #a3a9b1;
  display: flex;
  align-items: center;
  justify-content: center;
`;

const HEADERS = [
  'order_id', 'customer_id', 'order_status', 'order_purchase_timestamp', 'order_purchase_date', 'order_approved_at',
  'order_delivered_carrier_date', 'order_delivered_customer_date', 'order_estimated_delivery_date', 'customer_zip_code_prefix',
];

const DATA = `e481f51cbdc|9ef432eb62512|delivered|2/10/17 10:56|02/10/2017|2/10/17 11:07|4/10/17 19:55|10/10/17 21:25|43026|3149
53cdb2fc8bc|b0830fb4747a6|delivered|24/7/18 20:41|24/07/2018|26/7/18 3:24|26/7/18 14:31|7/8/18 15:27|43325|47813
47770eb91|41ce2a54c0b03|delivered|8/8/18 8:38|08/08/2018|8/8/18 8:55|8/8/18 13:50|17/8/18 18:06|43347|75265
949d5b44d|f88197465ea79|delivered|18/11/17 19:28|18/11/2017|18/11/17 19:45|22/11/17 13:39|2/12/17 0:28|43084|59296
ad21c59c0|8ab97904e6dae|delivered|13/2/18 21:18|13/02/2018|13/2/18 22:20|14/2/18 19:46|16/2/18 18:17|43157|9195
a4591c265|503740e9ca751|delivered|9/7/17 21:57|09/07/2017|9/7/17 22:10|11/7/17 14:58|26/7/17 10:57|42948|86320
136cce7faa4|ed0271e0b7da0|invoiced|11/4/17 12:22|11/04/2017|13/4/17 13:25|||42864|98900
6514b8ad8|9bdf08b4b3b52|delivered|16/5/17 13:10|16/05/2017|16/5/17 13:22|22/5/17 10:07|26/5/17 12:55|42893|26525
76c6e8662|f54a9f0e6b351c|delivered|23/1/17 18:29|23/01/2017|25/1/17 2:50|26/1/17 14:16|2/2/17 14:08|42800|99655
e69bfb5eb88|31ad1d1b63eb9|delivered|29/7/17 11:55|29/07/2017|29/7/17 12:05|10/8/17 19:45|16/8/17 17:14|42970|18075
e6ce16cb7|494dded5b2013|delivered|16/5/17 19:41|16/05/2017|16/5/17 19:50|18/5/17 11:40|29/5/17 11:18|42893|20780
34513ce0c|7711cf624183d|delivered|13/7/17 19:58|13/07/2017|13/7/17 20:10|14/7/17 18:43|19/7/17 14:04|42955|4001
82566a660|d3e3b74c766bc|delivered|7/6/18 10:06|07/06/2018|9/6/18 3:13|11/6/18 13:29|19/6/18 12:05|43299|35400
5ff96c15d0|19402a48fe860|delivered|25/7/18 17:44|25/07/2018|25/7/18 17:55|26/7/18 13:16|30/7/18 15:52|43320|4571
432aaf21d85|3df704f53d3f1d|delivered|1/3/18 14:14|01/03/2018|1/3/18 15:10|2/3/18 21:09|12/3/18 23:36|43180|5727
dcb36b511|3b6828a50ffe54|delivered|7/6/18 19:03|07/06/2018|12/6/18 23:31|11/6/18 14:54|21/6/18 15:34|43285|74210
403b97836|738b086814c6fc|delivered|2/1/18 19:00|02/01/2018|2/1/18 19:09|3/1/18 18:19|20/1/18 1:38|43137|21040
116f0b09343|3187789bec990|delivered|26/12/17 23:41|26/12/2017|26/12/17 23:50|28/12/17 18:33|8/1/18 22:36|43129|88330
85ce859fd6d|059f7fc5719c7da|delivered|21/11/17 0:03|21/11/2017|21/11/17 0:14|23/11/17 21:32|27/11/17 18:28|43080|13304
83018ec11|7f8c8b9c2ae27|delivered|26/10/17 15:54|26/10/2017|26/10/17 16:08|26/10/17 21:46|8/11/17 22:22|43062|44900
203096f03d8|d2b091571da22|delivered|18/9/17 14:31|18/09/2017|19/9/17 4:04|6/10/17 17:50|9/10/17 22:23|43006|4313
f848643eec1|4fa1cd166fa598|delivered|15/3/18 8:52|15/03/2018|15/3/18 9:09|15/3/18 19:52|19/3/18 18:08|43188|8710
2807d0e50|72ae281627a61|delivered|3/2/18 20:37|03/02/2018|3/2/18 20:50|5/2/18 22:37|8/2/18 16:13|43152|3573
95266dbfb7e|a166da3489007|delivered|8/1/18 7:55|08/01/2018|8/1/18 8:07|24/1/18 23:16|26/1/18 17:32|43152|89251
f3e7c359154|62b423aab5809|delivered|9/8/18 11:44|09/08/2018|10/8/18 3:24|10/8/18 12:29|13/8/18 18:24|43329|18130
fbf9ac61453|3a874b4d4c4b|delivered|20/2/18 23:46|20/02/2018|22/2/18 2:30|26/2/18 22:25|21/3/18 22:03|43171|3569`
  .split('\n')
  .map((line) => line.split('|'));

const VScroll = styled.div`
  width: 20px;
  height: 658px;
  margin-left: 2px;
  border-radius: 10px;
  background: #151515;
  display: flex;
  flex-direction: column;
  align-items: center;
  padding: 6px 0 6px;
  & > svg:last-child { margin-top: auto; }
`;

const VThumb = styled.div`
  width: 11px;
  height: 22px;
  margin-top: 6px;
  border-radius: 5px;
  background: #9c9c9c;
`;

const Grid = () => (
  <GridArea>
    <Sheet>
      <Line>
        <ColHead />
        {COLS.map((_, i) => (
          <ColHead key={i} $on={i === 4}>
            <T $s={16} $w={300} $c="#fff">{'ABCDEFGHIJ'[i]}</T>
          </ColHead>
        ))}
      </Line>
      <Line>
        <RowHead $on><T $s={15.5} $c="#e6e6e6">1</T></RowHead>
        {HEADERS.map((h, i) => (
          <HeadCell key={h} $selected={i === 4}>
            <HeadText>{h}</HeadText>
            <FilterButton>
              <Svg width="8" height="5" viewBox="0 0 8 5"><path d="M0 0H8L4 4.6z" fill="#5a6068" /></Svg>
            </FilterButton>
          </HeadCell>
        ))}
      </Line>
      {DATA.map((row, r) => (
        <Line key={r}>
          <RowHead><T $s={15.5} $w={300} $c="#f0f0f0">{r + 2}</T></RowHead>
          {row.map((v, i) => (
            <Cell key={i} $right={i > 2} $band={r % 2 === 0}>{v}</Cell>
          ))}
        </Line>
      ))}
    </Sheet>
    <VScroll>
      <Svg width="11" height="9" viewBox="0 0 11 9"><path d="M5.5.5 10.5 8.5H.5z" fill="#a3a3a3" stroke="#a3a3a3" strokeLinejoin="round" /></Svg>
      <VThumb />
      <Svg width="11" height="9" viewBox="0 0 11 9"><path d="M.5.5H10.5L5.5 8.5z" fill="#a3a3a3" stroke="#a3a3a3" strokeLinejoin="round" /></Svg>
    </VScroll>
  </GridArea>
);

/* ---------- sheet tabs ---------- */

const SheetBar = styled.section`
  height: 40px;
  flex: none;
  border-bottom: 1px solid #3a3a3a;
  display: flex;
  align-items: flex-start;
`;

const SheetTab = styled.div`
  width: 73px;
  height: 35px;
  margin-top: -1px;
  background: #fff;
  border-radius: 0 0 6px 6px;
  display: flex;
  flex-direction: column;
  align-items: center;
  padding-top: 6px;
  &::after {
    content: '';
    width: 52px;
    height: 2px;
    margin-top: 4px;
    background: #107c41;
  }
`;

const Nav = styled.div<{ $w: number }>`
  width: ${(p) => p.$w}px;
  height: 36px;
  flex: none;
  display: flex;
  align-items: center;
  justify-content: center;
`;

const HScroll = styled.div`
  width: 721px;
  height: 21px;
  margin: 8px 23px 0 auto;
  border-radius: 10px;
  background: #151515;
  display: flex;
  align-items: center;
  padding: 0 6px;
  & > svg:last-child { margin-left: auto; }
`;

const HThumb = styled.div`
  width: 278px;
  height: 11px;
  margin-left: 6px;
  border-radius: 5px;
  background: #9c9c9c;
`;

const ScrollSide = styled.div`
  margin-left: auto;
  display: flex;
`;

const SheetTabs = () => (
  <SheetBar>
    <Nav $w={71}><Svg width="7" height="12" viewBox="0 0 7 12"><path d="M6.5.5.8 6l5.7 5.5" stroke="#8a8a8a" strokeWidth="1.3" /></Svg></Nav>
    <Nav $w={10}><Svg width="7" height="12" viewBox="0 0 7 12"><path d="M.5.5 6.2 6 .5 11.5" stroke="#8a8a8a" strokeWidth="1.3" /></Svg></Nav>
    <Nav $w={60} />
    <SheetTab><T $s={16} $w={600} $ls={-0.4} $c="#2a2a2a">Sheet1</T></SheetTab>
    <Nav $w={9}><Rule $w={1} $h={24} /></Nav>
    <Nav $w={110}><Svg width="15" height="15" viewBox="0 0 15 15"><path d="M7.5 0V15M0 7.5H15" stroke="#dedede" strokeWidth="1.4" /></Svg></Nav>
    <ScrollSide>
      <Nav $w={40}><Dots /></Nav>
      <HScroll>
        <Svg width="9" height="11" viewBox="0 0 9 11"><path d="M8.5.5V10.5L.5 5.5z" fill="#a3a3a3" stroke="#a3a3a3" strokeLinejoin="round" /></Svg>
        <HThumb />
        <Svg width="9" height="11" viewBox="0 0 9 11"><path d="M.5.5V10.5L8.5 5.5z" fill="#a3a3a3" stroke="#a3a3a3" strokeLinejoin="round" /></Svg>
      </HScroll>
    </ScrollSide>
  </SheetBar>
);

/* ---------- status bar ---------- */

const StatusBar = styled.section`
  height: 26px;
  flex: none;
  background: #141414;
  display: flex;
  align-items: center;
  justify-content: space-between;
  padding: 0 11px 0 14px;
`;

const ViewButton = styled.div<{ $on?: boolean }>`
  width: 50px;
  height: 26px;
  display: flex;
  align-items: center;
  justify-content: center;
  background: ${(p) => (p.$on ? '#262626' : 'transparent')};
`;

const ZoomTrack = styled.div`
  width: 125px;
  height: 1px;
  margin: 1px 6px 0;
  background: #a8a8a8;
  display: flex;
  align-items: center;
  justify-content: center;
  &::after {
    content: '';
    width: 6px;
    height: 14px;
    flex: none;
    background: #b5b5b5;
  }
`;

const Status = () => (
  <StatusBar>
    <Row>
      <T $s={12.5} $ls={0}>Ready</T>
      <Tool $w={24} />
      <Svg width="19" height="19" viewBox="0 0 19 19">
        <circle cx="8.5" cy="2.6" r="2" stroke="#e0e0e0" strokeWidth="1.2" />
        <path d="M5.8 4 2 2.6C.8 2.4.2 4 1.3 4.6L5.5 6.7V10L3.4 16c-.3 1.5 1.6 2 2.2.8L8.5 11M11.2 4 15 2.6c1.2-.2 1.8 1.4.7 2L11.5 6.7V8.5" stroke="#e0e0e0" strokeWidth="1.2" />
        <path d="M9.5 9.5 18.5 18.5M18.5 9.5 9.5 18.5" stroke="#e0e0e0" strokeWidth="1.3" />
      </Svg>
      <Tool $w={3} />
      <T $s={12.5} $w={700} $ls={-0.1}>Accessibility: Investigate</T>
    </Row>
    <Row>
      <ViewButton $on>
        <Svg width="17" height="17" viewBox="0 0 17 17"><path d="M.8.8H16.2V16.2H.8zM6 1V16M11.2 1V16M1 6H16M1 11.2H16" stroke="#dcdcdc" strokeWidth="1.6" /></Svg>
      </ViewButton>
      <ViewButton>
        <Svg width="18" height="17" viewBox="0 0 18 17"><path d="M1 1H17V16H1z" stroke="#dcdcdc" strokeWidth="2" /><path d="M5 4H13V13H5zM6.5 6.5h5M6.5 8.5h5M6.5 10.5h5" stroke="#dcdcdc" strokeWidth="1.1" /></Svg>
      </ViewButton>
      <ViewButton>
        <Svg width="18" height="17" viewBox="0 0 18 17"><path d="M1 1H17V16H1z" stroke="#dcdcdc" strokeWidth="2" /><path d="M6 1V9.5M11.5 1V9.5H1" stroke="#dcdcdc" strokeWidth="1.5" /></Svg>
      </ViewButton>
      <Tool $w={7} />
      <Svg width="10" height="10" viewBox="0 0 10 10"><path d="M0 5H10" stroke="#e0e0e0" strokeWidth="1.2" /></Svg>
      <ZoomTrack />
      <Svg width="10" height="10" viewBox="0 0 10 10"><path d="M0 5H10M5 0V10" stroke="#e0e0e0" strokeWidth="1.2" /></Svg>
      <Tool $w={16} />
      <T $s={12.5} $ls={-0.05}>100 %</T>
    </Row>
  </StatusBar>
);

/* ---------- windows taskbar ---------- */

const TaskBar = styled.footer`
  height: 50px;
  flex: none;
  display: flex;
  align-items: stretch;
  background: linear-gradient(90deg, #1b2a31 0%, #1c2d31 30%, #1b2930 45%, #1c262a 58%, #1c2124 72%, #1a272d 80%, #1c2326 90%, #172b34 98%, #1b2226 100%);
`;

const TaskSearch = styled.div`
  width: 360px;
  background: #f2f2f2;
  border: 1px solid #c6c6c6;
  display: flex;
  align-items: center;
  padding-left: 14px;
  gap: 15px;
`;

const TaskButton = styled.div<{ $w?: number; $open?: boolean; $active?: boolean }>`
  width: ${(p) => p.$w ?? 62}px;
  flex: none;
  display: flex;
  align-items: center;
  justify-content: center;
  ${(p) =>
    p.$open &&
    css`
      background: linear-gradient(#b0e8fb, #b0e8fb) center bottom / 51px 3px no-repeat;
    `}
  ${(p) =>
    p.$active &&
    css`
      background: #495559;
      border-bottom: 3px solid #b0e8fb;
      padding-top: 3px;
    `}
`;

const TaskView = styled.div`
  width: 63px;
  flex: none;
  display: flex;
  align-items: center;
  padding-left: 20px;
`;

const Tray = styled.div`
  margin-left: auto;
  display: flex;
  align-items: center;
`;

const TrayIcon = styled.div<{ $w: number }>`
  width: ${(p) => p.$w}px;
  display: flex;
  align-items: center;
  justify-content: center;
`;

const Clock = styled.div`
  width: 90px;
  display: flex;
  flex-direction: column;
  align-items: center;
  gap: 3px;
  padding: 0 1px 2px 0;
`;

const Notice = styled.div`
  width: 61px;
  height: 50px;
  display: flex;
  align-items: center;
  padding: 9px 0 0 16px;
`;

const ShowDesktop = styled.div`
  width: 6px;
  height: 50px;
  border-left: 1px solid #5a6a70;
`;

const EdgeIcon = () => (
  <Svg width="30" height="30" viewBox="0 0 30 30">
    <defs>
      <linearGradient id="edgeTop" x1="0" y1="0" x2="1" y2=".5">
        <stop offset="0" stopColor="#2fa8e8" /><stop offset=".5" stopColor="#36c4d8" /><stop offset="1" stopColor="#6be04f" />
      </linearGradient>
      <linearGradient id="edgeLow" x1="0" y1="0" x2="0" y2="1">
        <stop offset="0" stopColor="#1a90dc" /><stop offset="1" stopColor="#0a5cc0" />
      </linearGradient>
    </defs>
    <path d="M0 14C.5 6 7 0 15 0c8.5 0 15 6 15 13 0 4.5-3.5 7.5-7.5 7.5-3.5 0-5.5-1.2-5.5-2.5 0-1 1.5-1.5 1.5-4 0-4-4-7-8.5-7S1 9 0 14z" fill="url(#edgeTop)" />
    <path d="M0 14C1 9.5 5 7.5 9 7.5c5 0 9.3 2.5 9.5 6-1-1.5-3-2.5-5-2C9.5 12.5 8.5 17 10 21c1.5 4 5 7 9 8.3C9.5 32 0 25 0 15z" fill="url(#edgeLow)" />
    <path d="M12.5 12c-2 1.5-2.5 4.5-1.5 8 1.5 4.5 5 8 8.5 9.2 4-1.2 7-4.2 8-7.2.3-.7-.5-1-1-.6-5 3-12 1.6-14-3.4-.7-2-.8-4 0-6z" fill="#0f4f96" />
  </Svg>
);

const FolderIcon = () => (
  <Svg width="28" height="24" viewBox="0 0 28 24">
    <path d="M0 1.5C0 .5.5 0 1.5 0H11l2 2.5V6H0z" fill="#d99a00" />
    <path d="M0 3.5H27a1 1 0 0 1 1 1V21a1 1 0 0 1-1 1H1a1 1 0 0 1-1-1z" fill="#ffd463" />
    <path d="M5 24V14.5c0-1.5.8-2.5 2.5-2.5h13c1.7 0 2.5 1 2.5 2.5V24H18.5V17.5h-9V24z" fill="#2f8fe0" />
  </Svg>
);

const WordIcon = () => (
  <Svg width="29" height="28" viewBox="0 0 29 28">
    <path d="M7 0H28a1 1 0 0 1 1 1v6H7z" fill="#41a5ee" />
    <path d="M7 7H29v7H7z" fill="#2b7cd3" />
    <path d="M7 14H29v7H7z" fill="#185abd" />
    <path d="M7 21H29v6a1 1 0 0 1-1 1H7z" fill="#103f91" />
    <rect y="6" width="16" height="16" rx="1.3" fill="#1450ae" />
    <path d="M2.6 9.6 5 18.2 8 10.3l3 7.9 2.4-8.6" stroke="#fff" strokeWidth="1.9" />
  </Svg>
);

const PowerPointIcon = () => (
  <Svg width="29" height="28" viewBox="0 0 29 28">
    <circle cx="15" cy="14" r="14" fill="#ed6c47" />
    <path d="M15 0a14 14 0 0 1 14 14H15z" fill="#ff8f6b" />
    <path d="M1 14H29a14 14 0 0 1-28 0z" fill="#d35230" />
    <rect y="6" width="16" height="16" rx="1.3" fill="#c43e1c" />
    <path d="M5.8 18.5V10.3H8.6c4 0 4 5.2 0 5.2H6" stroke="#fff" strokeWidth="2" />
  </Svg>
);

const PowerBiIcon = () => (
  <Svg width="24" height="30" viewBox="0 0 24 30">
    <defs>
      <linearGradient id="pbi" x1="0" y1="0" x2="1" y2="1"><stop offset="0" stopColor="#e6ad10" /><stop offset="1" stopColor="#c87e0e" /></linearGradient>
      <linearGradient id="pbi2" x1="0" y1="0" x2="1" y2="1"><stop offset="0" stopColor="#f6d751" /><stop offset="1" stopColor="#e6ad10" /></linearGradient>
      <linearGradient id="pbi3" x1="0" y1="0" x2="1" y2="1"><stop offset="0" stopColor="#f9e589" /><stop offset="1" stopColor="#f6d751" /></linearGradient>
    </defs>
    <path d="M14 0H24V30H14z" fill="url(#pbi)" />
    <path d="M7 7H17V30H7z" fill="url(#pbi2)" />
    <path d="M0 15H11V30H0z" fill="url(#pbi3)" />
  </Svg>
);

const SqlIcon = () => (
  <Svg width="28" height="28" viewBox="0 0 28 28">
    <path d="M2.5 3.5V16c0 3.5 15.5 3.5 15.5 0V3.5z" fill="#ffd500" />
    <path d="M2.5 3.5V16c0 1.8 3.5 2.7 7 2.7V3.5z" fill="#ffe566" />
    <ellipse cx="10.2" cy="3.5" rx="7.7" ry="3.2" fill="#f0a64c" />
    <path d="M20.5 1.5H26.5V7.5M1.5 20.5V26.5H7.5" stroke="#3f9b46" strokeWidth="2.6" />
    <path d="M12 25.5 22.5 15.5M14.5 16.5 24.5 26" stroke="#8e4fb8" strokeWidth="2.2" />
    <path d="M11 17.5 15 13.5M22 13v3.5h4.5" stroke="#8e4fb8" strokeWidth="2.6" />
  </Svg>
);

const ChromeIcon = () => (
  <Svg width="30" height="30" viewBox="0 0 30 30">
    <path d="M15 7.5H28A15 15 0 0 1 15 30L21.5 18.7z" fill="#fbbc04" />
    <path d="M2 7.5A15 15 0 0 0 15 30L21.5 18.8 15 15 8.5 18.8z" fill="#2f9e49" />
    <path d="M2 7.5A15 15 0 0 1 28 7.5H15L8.5 18.7z" fill="#ea4335" />
    <path d="M8.5 18.7 2 7.5A15 15 0 0 0 .5 15z" fill="#2f9e49" />
    <circle cx="15" cy="15" r="7.5" fill="#fff" />
    <circle cx="15" cy="15" r="6" fill="#3b7ded" />
  </Svg>
);

const PaintIcon = () => (
  <Svg width="30" height="28" viewBox="0 0 30 28">
    <path d="M14 4C22 3 28 7 28 14c0 7-5 12-12 12-3 0-2-3-4-5-2-1.5-5 0-8-1-5-2-4.5-8-1-11.5C6 5.5 9.5 4.5 14 4z" fill="#c5e1f2" />
    <circle cx="5" cy="15" r="2.4" fill="#e8473c" /><circle cx="9.5" cy="10" r="2.4" fill="#58b947" /><circle cx="15.5" cy="8" r="2.5" fill="#f5a01f" /><circle cx="13" cy="17" r="2" fill="#1c2a30" />
    <path d="M15.5 28 23.5 6l2 1z" fill="#b96d2a" stroke="#e89b4c" strokeWidth="1.3" />
    <path d="M23 6.5 22.5 1.5c1.5.5 3-.5 4-1.5l2.5 1c0 2.5-1 5-3 6.5z" fill="#d7b48a" />
  </Svg>
);

const NotepadIcon = () => (
  <Svg width="28" height="28" viewBox="0 0 28 28">
    <path d="M10 3 26 5 22 27 2 21z" fill="#8a6a3a" />
    <path d="M9 2 25 4 21 27 1 20z" fill="#e9f3f5" />
    <path d="M9.5 3 23 5 18.5 22.5 2.5 19z" fill="#6fb4c4" />
    <path d="M15 4 23 5 18.5 22.5 7 20z" fill="#9fd0da" />
    <path d="M9.5 1.5V4M12.5 1.8v2.4M15.5 2.2v2.4M18.5 2.6V5M21.5 3v2.4" stroke="#e8e8e8" strokeWidth="1" />
  </Svg>
);

const WeatherIcon = () => (
  <Svg width="31" height="30" viewBox="0 0 31 30">
    <defs><linearGradient id="cloud" x1="0" y1="0" x2="0" y2="1"><stop offset="0" stopColor="#dbe9fb" /><stop offset="1" stopColor="#8fb4ee" /></linearGradient></defs>
    <path d="M13 1C13 6 8 12 1 14c2 3.5 6 5 10 3.5C16.5 15.5 18 8 13 1z" fill="#f5a623" />
    <path d="M7 29C-1 29-1.5 19 6.5 18 8.5 11 19 10 21.5 17.5 32 16.5 33 28.5 24 29z" fill="url(#cloud)" />
    <circle cx="23.5" cy="7.5" r="7.2" fill="#c42b1c" />
    <path d="M22 5.2 24 4V11" stroke="#fff" strokeWidth="1.3" />
  </Svg>
);

const Task = () => (
  <TaskBar>
    <TaskButton $w={60}>
      <Svg width="20" height="20" viewBox="0 0 20 20"><path d="M0 3 8.5 1.7V9.5H0zM9.5 1.6 20 0V9.5H9.5zM0 10.5H8.5V18.3L0 17zM9.5 10.5H20V20L9.5 18.4z" fill="#fff" /></Svg>
    </TaskButton>
    <TaskSearch>
      <SearchGlyph s={20} c="#222" />
      <T $s={18} $ls={-0.04} $c="#4a4a4a">Taper ici pour rechercher</T>
    </TaskSearch>
    <TaskView>
      <Svg width="20" height="19" viewBox="0 0 20 19">
        <path d="M.5 0V2.5H13V0M.5 5H13V14H.5zM.5 19V16.5H13V19M18.5 0V5M18.5 10.5V19" stroke="#fff" strokeWidth="1.2" />
        <path d="M17 6h3v3H17z" fill="#fff" />
      </Svg>
    </TaskView>
    <TaskButton><EdgeIcon /></TaskButton>
    <TaskButton $open><FolderIcon /></TaskButton>
    <TaskButton $open><WordIcon /></TaskButton>
    <TaskButton><PowerPointIcon /></TaskButton>
    <TaskButton $active><ExcelLogo s={29} /></TaskButton>
    <TaskButton><PowerBiIcon /></TaskButton>
    <TaskButton><SqlIcon /></TaskButton>
    <TaskButton $open><ChromeIcon /></TaskButton>
    <TaskButton $open><PaintIcon /></TaskButton>
    <TaskButton $open><NotepadIcon /></TaskButton>
    <Tray>
      <WeatherIcon />
      <TrayIcon $w={10} />
      <T $s={17} $ls={-0.5}>8°C</T>
      <TrayIcon $w={11} />
      <T $s={17}>Ciel couvert</T>
      <TrayIcon $w={24} />
      <TrayIcon $w={32}>
        <Svg width="15" height="8" viewBox="0 0 15 8"><path d="M0 8 7.5.6 15 8" stroke="#fff" strokeWidth="1.3" /></Svg>
      </TrayIcon>
      <TrayIcon $w={28}>
        <Svg width="21" height="17" viewBox="0 0 21 17">
          <path d="M.6 5.5H3.5L7.4 2V15L3.5 11.5H.6z" stroke="#fff" strokeWidth="1.2" />
          <path d="M10 6c1 1.5 1 3.5 0 5" stroke="#fff" strokeWidth="1.2" />
          <path d="M13 3.5c2.3 3 2.3 7 0 10M16 1c3.6 4.5 3.6 10.5 0 15" stroke="#8a8f92" strokeWidth="1.2" />
        </Svg>
      </TrayIcon>
      <TrayIcon $w={32}>
        <Svg width="20" height="16" viewBox="0 0 20 16">
          <path d="M4 13C-1 13-1 6.5 3.5 6 5-.5 13-1 14.5 5c5 0 6.5 7 1.5 8z" fill="#1683dd" />
          <path d="M3.5 6c3-.5 5 .5 12 7H4C-1 13-1 6.5 3.5 6z" fill="#36b0f5" />
          <circle cx="14.5" cy="11" r="5" fill="#fff" />
          <path d="M11.8 11a2.8 2.8 0 0 1 5-1.5M17.2 11a2.8 2.8 0 0 1-5 1.5" stroke="#1683dd" strokeWidth="1.2" />
        </Svg>
      </TrayIcon>
      <TrayIcon $w={29}>
        <Svg width="20" height="14" viewBox="0 0 20 14">
          <path d="M4 13C-1 13-1 6.5 3.5 6 5-.5 13-1 14.5 5c5 0 6.5 7 1.5 8z" fill="#b0b0b0" />
          <path d="M4 13c-2 0-3-1-3.5-2C6 9 10 4 14.5 5c5 0 6.5 7 1.5 8z" fill="#f5f5f5" />
        </Svg>
      </TrayIcon>
      <TrayIcon $w={32}>
        <Svg width="15" height="18" viewBox="0 0 15 18">
          <path d="M1 5H10V13H1zM10 8l4-2.5v7L10 10M2 2C4 .3 9 .3 11 2M2 16c2 1.7 7 1.7 9 0" stroke="#fff" strokeWidth="1.2" />
        </Svg>
      </TrayIcon>
      <TrayIcon $w={29}>
        <Svg width="19" height="11" viewBox="0 0 19 11">
          <path d="M.6.6H17V10.4H.6zM18.3 3.5v4" stroke="#fff" strokeWidth="1.2" />
          <path d="M2.5 2.5H11V8.5H2.5z" fill="#fff" />
        </Svg>
      </TrayIcon>
      <TrayIcon $w={30}>
        <Svg width="16" height="16" viewBox="0 0 16 16">
          <path d="M1 15.5C1 7 7 1 15.5 1M4.5 15.5c0-6 5-10.5 11-10.5M8 15.5c0-4 3.5-7 7.5-7" stroke="#cfd3d5" strokeWidth="1.2" />
          <circle cx="13.5" cy="14" r="1.6" fill="#fff" />
        </Svg>
      </TrayIcon>
      <Clock>
        <T $s={14.5} $ls={-0.5}>22:44</T>
        <T $s={14.5} $ls={-0.15}>27/01/2025</T>
      </Clock>
      <Notice>
        <Svg width="32" height="30" viewBox="0 0 32 30">
          <path d="M0 0H20V15H8L3 19V15H0z" fill="#fff" />
          <path d="M3.5 4.5h13M3.5 8h13M3.5 11.5h8" stroke="#1b2529" strokeWidth="1.3" />
          <circle cx="19.5" cy="19.5" r="9.8" fill="#2b3337" stroke="#8a9296" strokeWidth="1" />
          <text x="19.5" y="24.5" textAnchor="middle" fontFamily="Noto Sans" fontWeight="600" fontSize="13.5" fill="#fff">2</text>
        </Svg>
      </Notice>
      <ShowDesktop />
    </Tray>
  </TaskBar>
);

export default function App() {
  return (
    <Screen>
      <GlobalStyle />
      <TitleArea />
      <Tabs />
      <Ribbon>
        <ClipboardGroup />
        <FontGroup />
        <AlignmentGroup />
        <NumberGroup />
        <StylesGroup />
        <CellsGroup />
        <EditingGroup />
        <AddinsGroup />
        <AnalyzeGroup />
        <CollapseCorner><Chevron w={12} h={6} sw={1.5} /></CollapseCorner>
      </Ribbon>
      <Banner>
        <Svg width="20" height="20" viewBox="0 0 20 20">
          <circle cx="10" cy="10" r="9.3" stroke="#3a9be0" strokeWidth="1.4" />
          <path d="M10 8.5V15M10 5V7" stroke="#3a9be0" strokeWidth="1.8" />
        </Svg>
        <BannerTitle><T $s={14} $w={600} $ls={0.08}>SUBSCRIPTION CANCELLED</T></BannerTitle>
        <MessageText><T $ls={-0.15}>On samedi 12 avril 2025, most features of Excel will be disabled.</T></MessageText>
        <Reactivate><T $ls={-0.1}><u>R</u>eactivate</T></Reactivate>
        <Svg width="11" height="11" viewBox="0 0 11 11"><path d="M0 0 11 11M11 0 0 11" stroke="#fff" strokeWidth="1.5" /></Svg>
      </Banner>
      <FormulaBar>
        <Field $w={127}>
          <T $s={15.5} $ls={-0.5}>E1</T>
          <Chevron w={12} h={6} c="#d0d0d0" sw={1.5} />
        </Field>
        <Tool $w={25}><Dots /></Tool>
        <FxField $w={107}>
          <Svg width="16" height="15" viewBox="0 0 16 15"><path d="M0 0 16 15M16 0 0 15" stroke="#7d7d7d" strokeWidth="1.3" /></Svg>
          <Svg width="20" height="13" viewBox="0 0 20 13"><path d="M0 6.5 6 12.5 19.5 0" stroke="#7d7d7d" strokeWidth="1.3" /></Svg>
          <Svg width="18" height="20" viewBox="0 0 18 20">
            <path d="M10.5 2C8.5-.5 6.8 1.5 6.3 4L3.8 16.5C3.3 19 1.8 20 .2 18.5M2.5 7H9" stroke="#dcdcdc" strokeWidth="1.5" />
            <path d="M9.3 9c2-1.8 3 .5 3.5 3s1.5 5 4 3M17.5 8.5c-3-1-4.5 7.5-8.5 7" stroke="#dcdcdc" strokeWidth="1.5" />
          </Svg>
          <Chevron w={11} h={6} c="#8a8a8a" sw={1.3} />
        </FxField>
        <WideField>
          <T $s={15.5} $ls={-0.05}>order_purchase_date</T>
          <Chevron w={12} h={6} c="#d0d0d0" sw={1.4} />
        </WideField>
      </FormulaBar>
      <Grid />
      <SheetTabs />
      <Status />
      <Task />
    </Screen>
  );
}
